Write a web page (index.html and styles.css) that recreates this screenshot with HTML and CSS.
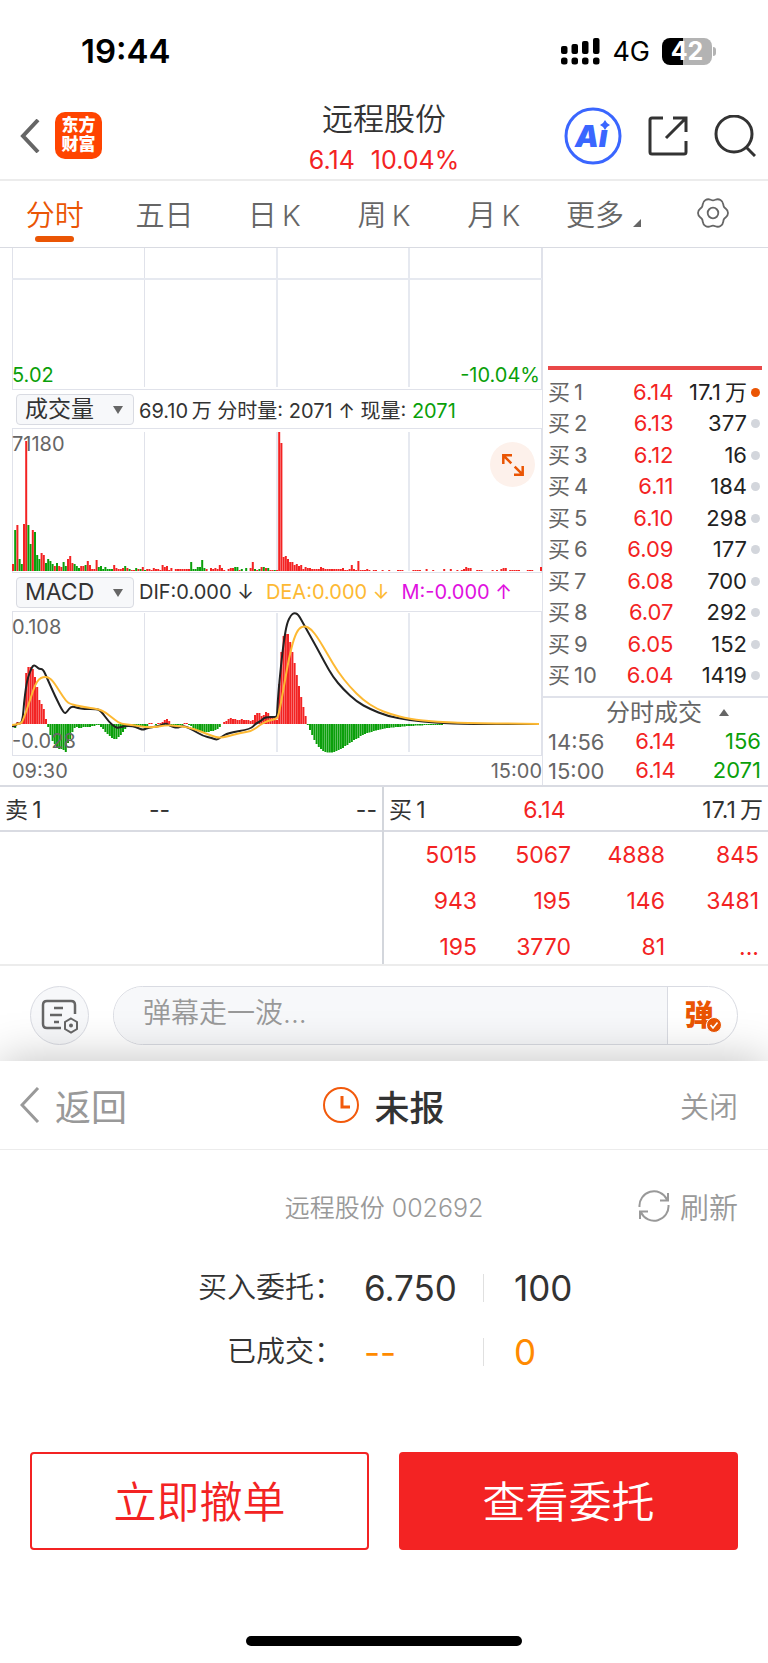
FILE: index.html
```
<!DOCTYPE html>
<html lang="zh-CN">
<head>
<meta charset="UTF-8" />
<meta name="viewport" content="width=device-width, initial-scale=1" />
<title>远程股份 002692</title>
<link rel="stylesheet" href="styles.css">
<script src="chart.js" defer></script>
</head>
<body>
	<div class="status">
		<span class="clock">19:44</span>
		<div class="status-right">
			<svg width="39" height="28" viewBox="0 0 39 28">
				<rect x="0" y="9" width="6.500" height="8" rx="2" />
				<rect x="10.500" y="7" width="6.500" height="10" rx="2" />
				<rect x="21" y="4" width="6.500" height="13" rx="2" />
				<rect x="32" y="1" width="6.500" height="16" rx="2" />
				<rect x="0" y="20.500" width="6.500" height="7" rx="2.500" />
				<rect x="10.500" y="20.500" width="6.500" height="7" rx="2.500" />
				<rect x="21" y="20.500" width="6.500" height="7" rx="2.500" />
				<rect x="32" y="20.500" width="6.500" height="7" rx="2.500" />
			</svg>
			<span class="net">4G</span>
			<div class="battery"><span>42</span></div>
		</div>
	</div>

	<header class="header">
		<div class="header-left">
			<button class="icon-btn" aria-label="返回">
				<svg width="20" height="34" viewBox="0 0 20 34" fill="none" stroke="#666" stroke-width="4"><path d="M18 1 3 17l15 16" /></svg>
			</button>
			<a class="logo" href="#">东方<br>财富</a>
		</div>
		<div class="title">
			<h1>远程股份</h1>
			<p><span>6.14</span><span>10.04%</span></p>
		</div>
		<div class="header-right">
			<button class="icon-btn" aria-label="Ai">
				<svg width="58" height="58" viewBox="0 0 58 58">
					<circle cx="29" cy="29" r="27" fill="none" stroke="#3a66ff" stroke-width="3" />
					<text class="ai" x="11" y="40">Aı</text>
					<path d="M41 13q1.500 3.500 5 5-3.500 1.500-5 5-1.500-3.500-5-5 3.500-1.500 5-5z" fill="#3a66ff" />
				</svg>
			</button>
			<button class="icon-btn" aria-label="分享">
				<svg width="40" height="40" viewBox="0 0 40 40" fill="none" stroke="#333" stroke-width="3">
					<path d="M15 2H4Q2 2 2 4v32q0 2 2 2h32q2 0 2-2V25M25 2h13v14M38 2 18 22" />
				</svg>
			</button>
			<button class="icon-btn" aria-label="搜索">
				<svg width="42" height="42" viewBox="0 0 42 42" fill="none" stroke="#333" stroke-width="3">
					<circle cx="20" cy="19" r="18" /><path d="M32 32l9 9" />
				</svg>
			</button>
		</div>
	</header>

	<nav class="tabs">
		<button class="active">分时</button>
		<button>五日</button>
		<button>日&thinsp;K</button>
		<button>周&thinsp;K</button>
		<button>月&thinsp;K</button>
		<button class="more">更多<i></i></button>
		<button aria-label="设置">
			<svg width="34" height="34" viewBox="-17 -17 34 34" fill="none" stroke="#666" stroke-width="1.800">
				<path d="M15 0C15 4.200 12.100 4.100 10.900 6.300S11.100 10.900 7.500 13 2.500 12.600 0 12.600-3.900 15.100-7.500 13-9.700 8.500-10.900 6.300-15 4.200-15 0-12.100-4.100-10.900-6.300-11.100-10.900-7.500-13-2.500-12.600 0-12.600 3.900-15.100 7.500-13 9.700-8.500 10.900-6.300 15-4.200 15 0z" />
				<circle r="5.300" />
			</svg>
		</button>
	</nav>

	<main class="quote">
		<section class="charts">
			<div class="chart price">
				<svg viewBox="0 0 530 142" preserveAspectRatio="none">
					<path class="grid" d="M.5 0v142M529.500 0v142M132.500 0v139M0 141.500h530" />
					<path class="grid wide" d="M265 0v139M397 0v139M0 31h530" />
				</svg>
				<span class="label bottom green">5.02</span>
				<span class="label bottom right green">-10.04%</span>
			</div>

			<div class="bar">
				<label class="pick"><select aria-label="指标一"><option>成交量</option><option>MACD</option></select></label>
				<p>69.10&thinsp;万 分时量: 2071 ↑ 现量: <span class="green">2071</span></p>
			</div>

			<div class="chart volume">
				<svg id="volume" viewBox="0 0 530 145" preserveAspectRatio="none">
					<path class="grid" d="M0 .5h530M.5 0v145M529.500 0v145M132.500 4v139M0 144.500h530" />
					<path class="grid wide" d="M265 4v139M397 4v139" />
				</svg>
				<span class="label top">71180</span>
				<button class="expand" aria-label="放大">
					<svg width="22" height="22" viewBox="0 0 22 22" fill="none" stroke="#ea5504" stroke-width="2.500">
						<path d="M1.300 10V1.300H10M1.300 1.300l8 8M20.700 12v8.700H12M20.700 20.700l-8-8" />
					</svg>
				</button>
			</div>

			<div class="bar">
				<label class="pick"><select aria-label="指标二"><option>MACD</option><option>成交量</option></select></label>
				<p class="values"><span>DIF:0.000 ↓</span><span class="dea">DEA:0.000 ↓</span><span class="m">M:-0.000 ↑</span></p>
			</div>

			<div class="chart macd">
				<svg id="macd" viewBox="0 0 530 145" preserveAspectRatio="none">
					<path class="grid" d="M0 .5h530M.5 0v145M529.500 0v145M132.500 2v139M0 144.500h530" />
					<path class="grid wide" d="M265 2v139M397 2v139" />
				</svg>
				<span class="label top">0.108</span>
				<span class="label bottom">-0.028</span>
			</div>

			<div class="times"><span>09:30</span><span>15:00</span></div>
		</section>

		<section class="book">
			<div class="spread"></div>
			<table class="levels">
				<tr><th>买&thinsp;1</th><td>6.14</td><td class="vol on">17.1&thinsp;万</td></tr>
				<tr><th>买&thinsp;2</th><td>6.13</td><td class="vol">377</td></tr>
				<tr><th>买&thinsp;3</th><td>6.12</td><td class="vol">16</td></tr>
				<tr><th>买&thinsp;4</th><td>6.11</td><td class="vol">184</td></tr>
				<tr><th>买&thinsp;5</th><td>6.10</td><td class="vol">298</td></tr>
				<tr><th>买&thinsp;6</th><td>6.09</td><td class="vol">177</td></tr>
				<tr><th>买&thinsp;7</th><td>6.08</td><td class="vol">700</td></tr>
				<tr><th>买&thinsp;8</th><td>6.07</td><td class="vol">292</td></tr>
				<tr><th>买&thinsp;9</th><td>6.05</td><td class="vol">152</td></tr>
				<tr><th>买&thinsp;10</th><td>6.04</td><td class="vol">1419</td></tr>
			</table>
			<button class="ticks-head">分时成交<i></i></button>
			<table class="ticks">
				<tr><th>14:56</th><td>6.14</td><td class="green">156</td></tr>
				<tr><th>15:00</th><td>6.14</td><td class="green">2071</td></tr>
			</table>
		</section>
	</main>

	<section class="queue">
		<div class="side">
			<div class="first"><span>卖&thinsp;1</span><span>--</span><span>--</span></div>
		</div>
		<div class="side">
			<div class="first"><span>买&thinsp;1</span><span class="red">6.14</span><span>17.1&thinsp;万</span></div>
			<table class="orders">
				<tr><td>5015</td><td>5067</td><td>4888</td><td>845</td></tr>
				<tr><td>943</td><td>195</td><td>146</td><td>3481</td></tr>
				<tr><td>195</td><td>3770</td><td>81</td><td>...</td></tr>
			</table>
		</div>
	</section>

	<form class="danmu">
		<button type="button" class="round" aria-label="弹幕设置">
			<svg width="38" height="36" viewBox="0 0 38 36" fill="none" stroke="#666" stroke-width="2.500">
				<path d="M20 30H6q-4 0-4-4V7q0-4 4-4h24q4 0 4 4v9M13 10h9M9 17h12M13 24h5" />
				<path d="M30 20.500l6 3.500v7l-6 3.500-6-3.500v-7z" stroke-width="2" />
				<circle cx="30" cy="27.500" r="2" fill="#666" stroke="none" />
			</svg>
		</button>
		<div class="field">
			<input type="text" placeholder="弹幕走一波..." aria-label="弹幕">
			<button type="button" class="send" aria-label="弹幕开关">弹
				<svg class="tick" width="16" height="16" viewBox="0 0 16 16">
					<circle cx="8" cy="8" r="7.500" fill="#ea5504" stroke="#fff" />
					<path d="M4.500 8l2.500 3 4.500-5.500" fill="none" stroke="#fff" stroke-width="1.600" />
				</svg>
			</button>
		</div>
	</form>

	<section class="sheet">
		<header class="sheet-head">
			<button class="back">
				<svg width="20" height="36" viewBox="0 0 20 36" fill="none" stroke="#999" stroke-width="3"><path d="M18 1 2 18l16 17" /></svg>
				返回
			</button>
			<h2>
				<svg width="36" height="36" viewBox="0 0 36 36" fill="none" stroke="#f25a0c">
					<circle cx="18" cy="18" r="17" stroke-width="2" /><path d="M19 9v11h8" stroke-width="3" />
				</svg>
				未报
			</h2>
			<button class="close">关闭</button>
		</header>
		<div class="stock">
			<span class="code">远程股份 002692</span>
			<button class="refresh">
				<svg width="32" height="32" viewBox="0 0 32 32" fill="none" stroke="#999" stroke-width="2">
					<path d="M1.500 17A14.500 14.500 0 0 1 29 9.500M30 3v7.500h-8M30.500 15A14.500 14.500 0 0 1 3 22.500M2 29v-7.500h8" />
				</svg>
				刷新
			</button>
		</div>
		<dl class="detail">
			<dt>买入委托：</dt><dd>6.750</dd><dd>100</dd>
			<dt>已成交：</dt><dd class="orange">--</dd><dd class="orange">0</dd>
		</dl>
		<div class="actions">
			<button>立即撤单</button>
			<button class="primary">查看委托</button>
		</div>
		<div class="home"></div>
	</section>
</body>
</html>
```
FILE: styles.css
```
* {
	box-sizing: border-box;
}
body {
	margin: 0;
	background-color: #fff;
	color: #333;
	font-family: Inter, "Noto Sans CJK SC", sans-serif;
	font-size: 20px;
	overflow-x: hidden;
}
h1, h2, p, dl, dd {
	margin: 0;
	font-weight: 400;
}
button, input, select {
	padding: 0;
	border: 0;
	background: none;
	color: inherit;
	font: inherit;
}
a {
	text-decoration: none;
}
svg {
	display: block;
}
table {
	border-collapse: collapse;
	table-layout: fixed;
}
th, td {
	padding: 0;
	font-weight: 400;
	text-align: right;
}
th {
	text-align: left;
	color: #666;
}
.red {
	color: #f32323;
}
.green {
	color: #0a9f0a;
}

.status {
	display: flex;
	justify-content: space-between;
	align-items: center;
	height: 90px;
	padding: 12px 56px 0 81px;
	color: #000;
}
.clock {
	font-size: 33px;
	font-weight: 600;
}
.status-right {
	display: flex;
	align-items: center;
	gap: 12px;
}
.net {
	font-size: 27px;
}
.battery {
	position: relative;
	width: 50px;
	height: 27px;
	border-radius: 8px;
	background: linear-gradient(90deg, #000 42%, #b3b3b3 42%);
	color: #fff;
	font-size: 25px;
	font-weight: 700;
	line-height: 27px;
	text-align: center;
}
.battery::after {
	content: "";
	position: absolute;
	right: -4px;
	top: 9px;
	width: 3px;
	height: 9px;
	border-radius: 0 3px 3px 0;
	background-color: #b3b3b3;
}

.header {
	display: grid;
	grid-template-columns: 1fr auto 1fr;
	align-items: center;
	height: 91px;
	padding: 2px 12px 0;
	border-bottom: 2px solid #ececec;
}
.header-left, .header-right {
	display: flex;
	align-items: center;
	gap: 15px;
}
.header-left {
	padding-left: 8px;
}
.header-right {
	justify-content: flex-end;
	gap: 26px;
}
.logo {
	width: 47px;
	height: 47px;
	padding-top: 4px;
	border-radius: 10px;
	background-color: #ff4400;
	color: #fff;
	font-size: 17px;
	font-weight: 900;
	line-height: 19px;
	text-align: center;
}
.title {
	padding-top: 4px;
	text-align: center;
}
.title h1 {
	font-size: 31px;
	line-height: 44px;
	font-weight: 350;
}
.title p {
	display: flex;
	justify-content: center;
	gap: 16px;
	font-size: 25px;
	line-height: 38px;
	color: #f32323;
}
.ai {
	fill: #3a66ff;
	font-size: 30px;
	font-weight: 900;
	font-style: italic;
}

.tabs {
	display: grid;
	grid-template-columns: repeat(7, 1fr);
	height: 67px;
	border-bottom: 1px solid #d9dbe2;
}
.tabs button {
	position: relative;
	display: flex;
	justify-content: center;
	align-items: center;
	padding-bottom: 3px;
	color: #666;
	font-size: 29px;
	font-weight: 350;
}
.tabs .active {
	color: #ea5504;
}
.tabs .active::after {
	content: "";
	position: absolute;
	bottom: 5px;
	width: 39px;
	height: 6px;
	border-radius: 3px;
	background-color: #ea5504;
}
.tabs .more {
	gap: 9px;
}
.more i {
	align-self: flex-end;
	margin-bottom: 17px;
	border-bottom: 8px solid #666;
	border-left: 8px solid transparent;
}

.quote {
	display: grid;
	grid-template-columns: 530fr 226fr;
	padding-left: 12px;
	border-bottom: 2px solid #d9dbe2;
}
.chart {
	position: relative;
}
.chart > svg {
	width: 100%;
	height: 145px;
}
.price > svg {
	height: 142px;
}
.grid {
	fill: none;
	stroke: #e0e2ea;
}
.wide {
	stroke: #e6e9f0;
	stroke-width: 2;
}
.up {
	fill: #f32323;
}
.down {
	fill: #0a9f0a;
}
.line {
	fill: none;
	stroke: #222;
	stroke-width: 2;
}
.line.slow {
	stroke: #fdb933;
}
.label {
	position: absolute;
	left: 0;
	font-size: 20px;
	line-height: 24px;
	color: #666;
}
.label.top {
	top: 4px;
}
.label.bottom {
	bottom: 3px;
}
.label.right {
	left: auto;
	right: 2px;
}
.label.green {
	color: #0a9f0a;
}
.bar {
	display: flex;
	align-items: center;
	height: 38px;
	padding-left: 4px;
	gap: 5px;
	white-space: nowrap;
}
.values {
	display: flex;
	gap: 12px;
}
.dea {
	color: #fdb933;
}
.m {
	color: #e010e0;
}
.pick {
	position: relative;
}
.pick::after {
	content: "";
	position: absolute;
	right: 11px;
	top: 12px;
	border: 5px solid transparent;
	border-top: 8px solid #666;
	border-bottom: 0;
}
.pick select {
	display: block;
	width: 118px;
	height: 31px;
	padding-left: 8px;
	border: 1px solid #d9dbe2;
	border-radius: 4px;
	background-color: #f7f8fa;
	font-size: 23px;
	line-height: 28px;
	appearance: none;
}
.expand {
	position: absolute;
	right: 7px;
	top: 14px;
	display: flex;
	justify-content: center;
	align-items: center;
	width: 45px;
	height: 45px;
	border-radius: 50%;
	background-color: #fdf1eb;
}
.times {
	display: flex;
	justify-content: space-between;
	height: 29px;
	color: #666;
	line-height: 30px;
}

.book {
	display: flex;
	flex-direction: column;
	border-left: 1px solid #e0e2ea;
}
.spread {
	height: 122px;
	margin: 0 6px 0 5px;
	border-bottom: 4px solid #e94848;
}
.levels, .ticks {
	width: 100%;
	color: #f32323;
	font-size: 22px;
}
.levels {
	height: 315px;
	margin: 6px 0 5px;
}
.levels th, .ticks th {
	padding-left: 5px;
}
.levels td, .levels th {
	line-height: 28px;
}
.levels .vol {
	color: #222;
	white-space: nowrap;
	padding-right: 8px;
}
.levels th {
	width: 31%;
}
.levels td:nth-child(2) {
	width: 27%;
}
.vol::after {
	content: "";
	display: inline-block;
	width: 9px;
	height: 9px;
	margin-left: 4px;
	border-radius: 50%;
	background-color: #d3d6dc;
	vertical-align: 3px;
}
.vol.on::after {
	background-color: #ea5504;
}
.ticks-head {
	display: flex;
	justify-content: center;
	align-items: center;
	gap: 17px;
	height: 31px;
	padding-left: 24px;
	border-top: 2px solid #e0e2ea;
	color: #666;
	font-size: 24px;
	line-height: 28px;
}
.ticks-head i {
	border: 5px solid transparent;
	border-bottom: 7px solid #666;
	border-top: 0;
}
.ticks th {
	width: 33%;
}
.ticks td {
	width: 26%;
	line-height: 29px;
}
.ticks td:last-child {
	width: auto;
	padding-right: 7px;
}

.queue {
	display: grid;
	grid-template-columns: 382fr 386fr;
	border-bottom: 2px solid #ececec;
}
.side + .side {
	border-left: 2px solid #d3d6dc;
}
.first {
	display: grid;
	grid-template-columns: 115fr 80fr 178fr;
	height: 45px;
	padding: 0 5px;
	border-bottom: 2px solid #d9dbe2;
	font-size: 23px;
	line-height: 46px;
	text-align: center;
}
.first span:first-child {
	text-align: left;
}
.first span:last-child {
	text-align: right;
}
.orders {
	width: calc(100% - 8px);
	margin: 0 0 -6px 8px;
	color: #f32323;
	font-size: 23px;
	line-height: 30px;
}
.orders td {
	padding: 8px 9px 8px 0;
}

.danmu {
	display: flex;
	gap: 24px;
	padding: 20px 30px 16px;
}
.round {
	display: flex;
	justify-content: center;
	align-items: center;
	width: 59px;
	height: 59px;
	border: 1px solid #d9dbe2;
	border-radius: 50%;
	background-color: #f7f8fa;
}
.field {
	display: flex;
	flex: 1;
	height: 59px;
	border: 1px solid #d9dbe2;
	border-radius: 30px;
	overflow: hidden;
}
.field input {
	flex: 1;
	min-width: 0;
	padding: 0 29px 5px;
	background-color: #f7f8fa;
	font-size: 28px;
	font-weight: 350;
}
.field input::placeholder {
	color: #999;
}
.send {
	position: relative;
	width: 70px;
	padding: 0 7px 6px 0;
	border-left: 1px solid #d9dbe2;
	color: #ea5504;
	font-size: 29px;
	font-weight: 900;
}
.tick {
	position: absolute;
	right: 15px;
	bottom: 11px;
}

.sheet {
	position: relative;
	padding-bottom: 16px;
	background-color: #fff;
	box-shadow: 0 0 44px rgba(0, 0, 0, 0.25);
}
.sheet-head {
	display: grid;
	grid-template-columns: 1fr auto 1fr;
	align-items: center;
	height: 89px;
	padding: 0 20px;
	border-bottom: 1px solid #ececec;
}
.sheet-head h2, .back {
	display: flex;
	align-items: center;
	gap: 15px;
	font-size: 36px;
}
.sheet-head h2 {
	font-size: 35px;
	font-weight: 500;
}
.back, .close {
	color: #999;
}
.close {
	justify-self: end;
	margin-right: 10px;
	font-size: 29px;
	font-weight: 350;
}
.stock {
	display: grid;
	grid-template-columns: 1fr auto 1fr;
	align-items: center;
	height: 112px;
	padding: 0 30px;
	color: #999;
}
.code {
	grid-column: 2;
	font-size: 25px;
	font-weight: 350;
}
.refresh {
	display: flex;
	justify-self: end;
	align-items: center;
	gap: 10px;
	font-size: 29px;
	font-weight: 350;
}
.detail {
	display: grid;
	grid-template-columns: 343fr 140fr 285fr;
	row-gap: 36px;
	padding-top: 12px;
	line-height: 28px;
}
.detail dt {
	font-size: 29px;
	font-weight: 350;
	text-align: right;
}
.detail dd {
	padding-left: 21px;
	font-size: 35px;
}
.detail dd + dd {
	padding-left: 30px;
	border-left: 1px solid #e0e0e0;
}
.orange {
	color: #ff8a00;
}
.actions {
	display: grid;
	grid-template-columns: 1fr 1fr;
	gap: 30px;
	padding: 86px 30px;
}
.actions button {
	height: 98px;
	padding-bottom: 4px;
	border: 2px solid #f32323;
	border-radius: 4px;
	color: #f32323;
	font-size: 43px;
	font-weight: 350;
}
.actions .primary {
	background-color: #f32323;
	color: #fff;
}
.home {
	width: 36%;
	height: 10px;
	margin: 0 auto;
	border-radius: 5px;
	background-color: #000;
}
```
FILE: chart.js
```
var NS = "http://www.w3.org/2000/svg",
	STEP = 2.2;

// minute volumes, negative = falling minute
var volume = [
	7, -41, 46, -12, -7, 47, 130, -46, -27, 41, -39, -16, -12, 18, 16, -8, -12, -10, -7, 5,
	-8, 5, 4, -9, -5, 12, 15, 8, -7, -5, -3, 5, 5, -6, 10, 6, 2, 2, 11, -4,
	-5, -2, -4, -2, -2, -2, 6, 3, 2, 2, 3, -5, 3, -2, 1, 1, -3, 2, -2, 4,
	-1, 2, 2, 1, 3, 2, 2, 1, 6, 4, 5, 1, 3, 0, 2, 2, 2, 2, 2, 2,
	2, -9, -2, -2, -4, -4, -11, -3, 2, 0, 3, 2, 3, 2, 6, 3, 1, 0, 2, 3,
	3, -4, -4, 1, -2, 0, -3, 0, 3, 9, -2, 1, -2, 4, -4, 3, -3, 1, 1, -1,
	1, 139, 128, 14, 15, 12, 9, 9, 6, 7, 5, 6, 2, 4, 3, 3, 2, 2, 2, 2,
	4, 3, 2, 2, 2, 2, 2, 2, 2, 2, 3, 1, 1, 2, 6, 2, 1, 10, 1, 1,
	1, 2, 1, 0, 1, 1, 0, 0, 1, 0, 0, 1, 0, 0, 0, 1, 1, 1, 0, 0,
	0, 0, 1, 1, 1, 1, 0, 0, 2, 0, 0, 1, 0, 0, 0, 0, 2, 0, 0, 2,
	0, 0, 1, 0, 1, 2, 4, 3, 3, 0, 0, 1, 1, 1, 0, 0, 0, 0, 1, 0,
	1, 0, 2, 3, 3, 0, 1, 1, 1, 1, 1, 0, 0, 0, 1, 1, 1, 0, 0, 0, 4
];

var macd = [
	-3, -4, 2, 1, 2, 8, 51, 57, 57, 55, 47, 37, 24, 20, 15, 5, -3, -11, -17, -20,
	-24, -25, -25, -26, -28, -19, -15, -8, -4, -3, -4, -4, -3, -3, -3, -3, -2, -2, -1, -1,
	-3, -5, -8, -10, -12, -14, -15, -15, -13, -11, -8, -5, -2, -1, -1, -1, -1, -2, -3, -3,
	-3, -2, 1, 1, 0, -1, 1, 1, 2, 4, 5, 3, -1, -1, -1, -1, -1, -1, 1, 1,
	-1, -2, -4, -5, -6, -7, -8, -8, -8, -8, -7, -7, -6, -5, -3, 0, 2, 3, 5, 6,
	5, 5, 4, 4, 5, 4, 4, 4, 3, 4, 9, 11, 11, 8, 9, 12, 11, 8, 6, 7,
	4, 40, 72, 88, 90, 90, 82, 72, 61, 49, 38, 27, 17, 8, -1, -6, -11, -16, -20, -23,
	-25, -27, -28, -28.500, -28.500, -28.500, -28, -27, -26, -25, -24, -22, -21, -19, -18, -16, -15, -14, -12, -11,
	-10, -9, -8.500, -8, -7, -6.500, -6, -5.500, -5, -4.500, -4, -4, -3.500, -3.500, -3, -3, -3, -2.500, -2.500, -2,
	-2, -2, -2, -1.500, -1.500, -1.500, -1.500, -1, -1, -1, -1, -1, -1, -1, -1, -1
];

var dif = [
	0, 115, 3, 116, 5, 112, 9, 113, 11, 106, 12, 92, 14, 76, 16, 66, 20, 56, 22, 54,
	25, 56, 27, 58, 31, 58, 35, 67, 43, 85, 52, 103, 55, 101, 59, 95, 66, 97, 72, 98,
	85, 98, 89, 100, 97, 111, 103, 116, 106, 117, 112, 115, 121, 115, 126, 117, 131, 119, 135, 117,
	148, 115, 154, 112, 158, 115, 165, 117, 170, 115, 175, 116, 181, 119, 191, 125, 200, 127, 205, 129,
	209, 126, 216, 122, 239, 118, 243, 113, 249, 110, 253, 106, 264, 106, 265, 105, 266, 86, 269, 54,
	272, 29, 275, 12, 279, 4, 282, 2, 286, 3, 291, 12, 296, 21, 305, 37, 313, 52, 321, 66,
	331, 78, 345, 91, 358, 98, 375, 105, 397, 109, 425, 112, 458, 113, 527, 113
];

var dea = [
	0, 114, 9, 113, 11, 109, 15, 98, 19, 86, 23, 74, 27, 68, 31, 66, 36, 66, 41, 70,
	48, 81, 54, 90, 58, 93, 71, 96, 86, 98, 93, 101, 103, 109, 109, 113, 121, 114, 138, 117,
	155, 114, 165, 115, 175, 116, 188, 120, 205, 127, 213, 126, 228, 122, 240, 120, 248, 114, 255, 110,
	264, 108, 266, 106, 269, 92, 273, 69, 277, 47, 282, 27, 287, 17, 293, 15, 299, 18, 306, 27,
	316, 44, 326, 61, 338, 76, 351, 89, 365, 98, 378, 103, 397, 108, 425, 111, 458, 112, 527, 113
];

function add(svg, name, attrs) {
	var el = document.createElementNS(NS, name);
	for (var key in attrs) {
		el.setAttribute(key, attrs[key]);
	}
	svg.appendChild(el);
}

function bars(svg, data, base, signed) {
	for (var i = 0; i < data.length; i++) {
		var h = Math.abs(data[i]);
		if (!h) {
			continue;
		}
		add(svg, "rect", {
			"class": data[i] > 0 ? "up" : "down",
			x: i * STEP,
			y: signed && data[i] < 0 ? base : base - h,
			width: 2,
			height: h
		});
	}
}

// curve through the midpoints of neighbouring points
function line(svg, p, cls) {
	var d = "M" + p[0] + " " + p[1];
	for (var i = 2; i < p.length - 2; i += 2) {
		d += "Q" + p[i] + " " + p[i + 1] + " " + (p[i] + p[i + 2]) / 2 + " " + (p[i + 1] + p[i + 3]) / 2;
	}
	d += "L" + p[p.length - 2] + " " + p[p.length - 1];
	add(svg, "path", { "class": cls, d: d });
}

var volumeSvg = document.getElementById("volume"),
	macdSvg = document.getElementById("macd");
bars(volumeSvg, volume, 143, false);
bars(macdSvg, macd, 113, true);
line(macdSvg, dif, "line");
line(macdSvg, dea, "line slow");
```
